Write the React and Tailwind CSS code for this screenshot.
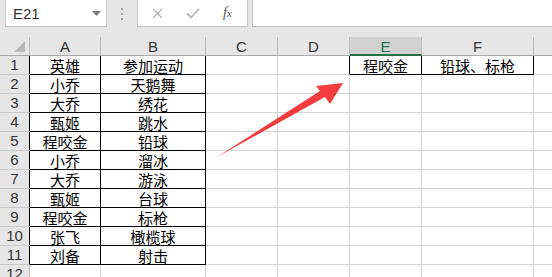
import React from "react";

const colA = ["英雄","小乔","大乔","甄姬","程咬金","小乔","大乔","甄姬","程咬金","张飞","刘备"];
const colB = ["参加运动","天鹅舞","绣花","跳水","铅球","溜冰","游泳","台球","标枪","橄榄球","射击"];

const cjk = { fontFamily: '"Noto Sans CJK SC", "Noto Sans", sans-serif' };

function Cell({ children, right, bottom, className = "" }) {
  return (
    <div
      className={`h-[19px] bg-white border-r border-b flex items-center justify-center text-[15px] leading-none text-black ${right ? "border-r-black" : "border-r-[#d4d4d4]"} ${bottom ? "border-b-black" : "border-b-[#d4d4d4]"} ${className}`}
      style={cjk}
    >
      {children}
    </div>
  );
}

export default function App() {
  const rows = [];
  for (let i = 0; i < 12; i++) {
    const r = i + 1;
    const inTable = r <= 11;
    rows.push(
      <React.Fragment key={r}>
        <div
          className={`h-[19px] bg-[#e6e6e6] border-b border-b-[#c8c8c8] border-r flex items-center justify-center text-[15px] text-[#333] ${inTable ? "border-r-black" : "border-r-[#bcbcbc]"}`}
          style={{ fontFamily: '"Liberation Sans", sans-serif' }}
        >
          {r}
        </div>
        <Cell right={inTable} bottom={inTable}>{inTable ? colA[i] : ""}</Cell>
        <Cell right={inTable} bottom={inTable}>{inTable ? colB[i] : ""}</Cell>
        <Cell />
        <Cell right={r === 1} />
        <Cell right={r === 1} bottom={r === 1}>{r === 1 ? "程咬金" : ""}</Cell>
        <Cell right={r === 1} bottom={r === 1}>{r === 1 ? "铅球、标枪" : ""}</Cell>
        <Cell />
      </React.Fragment>
    );
  }

  const headers = ["A", "B", "C", "D", "E", "F", ""];

  return (
    <div className="relative w-[552px] h-[277px] overflow-hidden bg-[#e6e6e6]" style={{ fontFamily: '"Liberation Sans", sans-serif' }}>
      {/* formula bar */}
      <div className="flex h-[27px]">
        <div className="w-[5px]" />
        <div className="w-[102px] h-[27px] bg-white border border-t-0 border-[#c6c6c6] flex items-center justify-between pl-[7px] pr-[5px]">
          <span className="text-[15px] text-[#333] leading-none">E21</span>
          <svg width="9" height="5" viewBox="0 0 9 5"><path d="M0 0 L9 0 L4.5 5 Z" fill="#7a7a7a" /></svg>
        </div>
        <div className="w-[30px] flex flex-col items-center justify-center gap-[3px]">
          <div className="w-[2px] h-[2px] bg-[#a0a0a0]" />
          <div className="w-[2px] h-[2px] bg-[#a0a0a0]" />
          <div className="w-[2px] h-[2px] bg-[#a0a0a0]" />
        </div>
        <div className="w-[111px] h-[27px] bg-white border border-t-0 border-[#c6c6c6] flex items-center">
          <svg className="ml-[14px]" width="11" height="11" viewBox="0 0 11 11">
            <path d="M1 1 L10 10 M10 1 L1 10" stroke="#b4b4b4" strokeWidth="1.3" />
          </svg>
          <svg className="ml-[23px]" width="14" height="11" viewBox="0 0 14 11">
            <path d="M1 5.5 L5 9.5 L13 1" stroke="#b4b4b4" strokeWidth="1.8" fill="none" />
          </svg>
          <span className="ml-[23px] text-[14px] italic text-[#555] leading-none" style={{ fontFamily: '"Liberation Serif", serif' }}>
            f<span className="text-[11px]">x</span>
          </span>
        </div>
        <div className="w-[4px]" />
        <div className="flex-1 h-[27px] bg-white border border-t-0 border-r-0 border-[#c6c6c6]" />
      </div>
      <div className="h-[10px]" />
      {/* sheet */}
      <div className="grid grid-cols-[30px_71px_105px_72px_72px_72px_112px_72px]">
        {/* header row */}
        <div className="relative h-[19px] border-r border-b border-r-[#bcbcbc] border-b-[#ababab]">
          <svg className="absolute left-[14px] top-[4px]" width="12" height="12" viewBox="0 0 12 12">
            <path d="M11 0 L11 11 L0 11 Z" fill="#b9b9b9" />
          </svg>
        </div>
        {headers.map((h, i) => (
          <div
            key={i}
            className={`h-[19px] border-r border-r-[#bcbcbc] flex items-center justify-center text-[15px] leading-none ${h === "E" ? "bg-[#d2d2d2] text-[#217346] border-b-2 border-b-[#217346]" : "text-[#333] border-b border-b-[#ababab]"}`}
          >
            <span className={h === "E" ? "mt-[2px]" : ""}>{h}</span>
          </div>
        ))}
        {rows}
      </div>
      {/* arrow overlay */}
      <svg className="absolute left-0 top-0 pointer-events-none" width="552" height="277" viewBox="0 0 552 277">
        <polygon
          points="217,157 320,91 316,86 343,83 330,104 325,97"
          fill="#f43c3c"
        />
      </svg>
    </div>
  );
}
